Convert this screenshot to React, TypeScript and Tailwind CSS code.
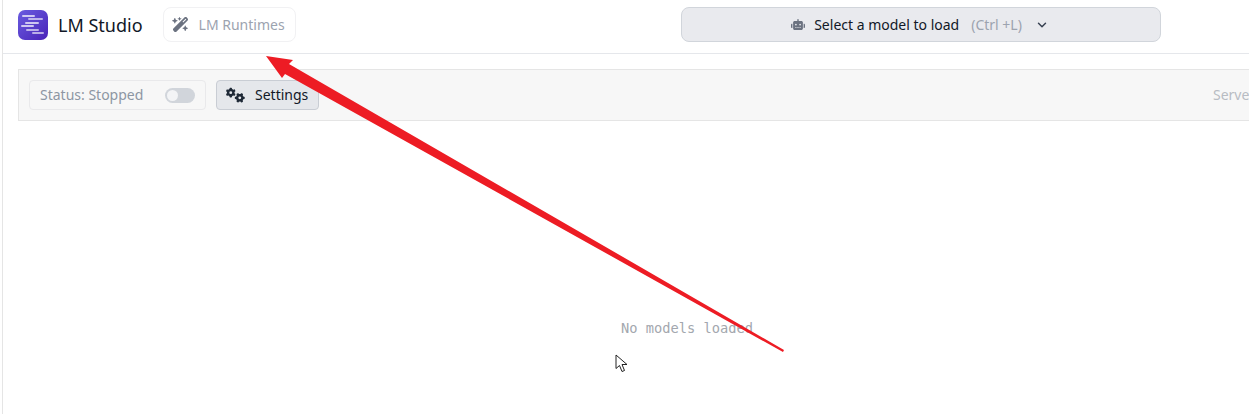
import React from "react";
import { ChevronDown } from "lucide-react";
import { FaRobot, FaGears, FaWandMagicSparkles } from "react-icons/fa6";

export default function App() {
  return (
    <div className="relative h-[414px] w-[1249px] overflow-hidden bg-white font-['Noto_Sans',sans-serif]">
      <div className="ml-[2px] flex h-[414px] flex-col border-l border-[#e5e5e5]">
        <header className="flex h-[54px] shrink-0 items-center border-b border-[#e5e7eb] pb-[4px] pl-[15px]">
          <div className="flex h-[30px] w-[30px] flex-col items-start justify-center gap-[1.5px] rounded-[7px] bg-gradient-to-br from-[#6a5be0] to-[#4a1fb8] pl-[3px]">
            <span className="ml-[1px] h-[2px] w-[13px] rounded bg-white/70 blur-[0.4px]" />
            <span className="ml-[7px] h-[2px] w-[15px] rounded bg-white/60 blur-[0.4px]" />
            <span className="ml-[4px] h-[2px] w-[14px] rounded bg-white/70 blur-[0.4px]" />
            <span className="ml-[0px] h-[2px] w-[13px] rounded bg-white/70 blur-[0.4px]" />
            <span className="ml-[5px] h-[2px] w-[13px] rounded bg-white/60 blur-[0.4px]" />
            <span className="ml-[11px] h-[2px] w-[12px] rounded bg-white/60 blur-[0.4px]" />
          </div>
          <span className="ml-[10px] text-[18px] leading-none text-[#111827]">LM Studio</span>
          <div className="ml-[20px] flex h-[35px] w-[133px] items-center rounded-[8px] border border-[#f1f1f3] pl-[8px] text-[14px] text-[#9ca3af]">
            <FaWandMagicSparkles className="h-[17px] w-[17px] text-[#6b7280]" />
            <span className="ml-[10px]">LM Runtimes</span>
          </div>
          <div className="ml-[385px] flex h-[35px] w-[480px] items-center justify-center rounded-[8px] border border-[#d1d5db] bg-[#e9eaee] pr-[1px] text-[14px]">
            <FaRobot className="h-[13px] w-[14px] text-[#6b7280]" />
            <span className="ml-[9px] text-[#111827]">Select a model to load</span>
            <span className="ml-[12px] text-[#9ca3af]">(Ctrl +L)</span>
            <ChevronDown className="ml-[13px] h-[14px] w-[14px] text-[#374151]" strokeWidth={2.5} />
          </div>
        </header>
        <div className="ml-[15px] mt-[15px] flex h-[52px] shrink-0 items-center border border-r-0 border-[#e5e5e5] bg-[#f7f7f7] pl-[10px]">
          <div className="flex h-[30px] w-[177px] items-center justify-between rounded-[4px] border border-[#e9e9eb] pl-[10px] pr-[10px] text-[14px] text-[#8d96a3]">
            <span className="mt-[-2px]">Status: Stopped</span>
            <span className="flex h-[15px] w-[30px] items-center rounded-full bg-[#d1d5db] pl-[2px]">
              <span className="h-[11px] w-[11px] rounded-full bg-[#f3f4f6]" />
            </span>
          </div>
          <div className="ml-[10px] flex h-[30px] w-[103px] items-center rounded-[4px] border border-[#c9cdd4] bg-[#e5e7eb] pl-[9px] text-[14px] text-[#111827]">
            <FaGears className="h-[18px] w-[19px] text-[#1f2937]" />
            <span className="ml-[10px] mt-[-2px]">Settings</span>
          </div>
          <span className="ml-auto mr-[-20px] mt-[-2px] w-[56px] text-[14px] text-[#b8bcc3]">Server</span>
        </div>
        <div className="flex flex-1 items-start justify-center pl-[122px] pt-[198px]">
          <span className="font-['DejaVu_Sans_Mono',monospace] text-[13.7px] leading-[18px] text-[#a3a7ae]">No models loaded</span>
        </div>
      </div>
      <svg className="absolute left-0 top-0" width="1249" height="414" viewBox="0 0 1249 414">
        <polygon points="266,56 293,60 289,64 784,350 783,352 285,74 282,78" fill="#ed1c24" />
        <path d="M616 355 L616 368.5 L619.5 365.5 L622 371.5 L624.5 370.5 L622 364.5 L627 364.5 Z" fill="#fff" stroke="#222" strokeWidth="1" />
      </svg>
    </div>
  );
}
